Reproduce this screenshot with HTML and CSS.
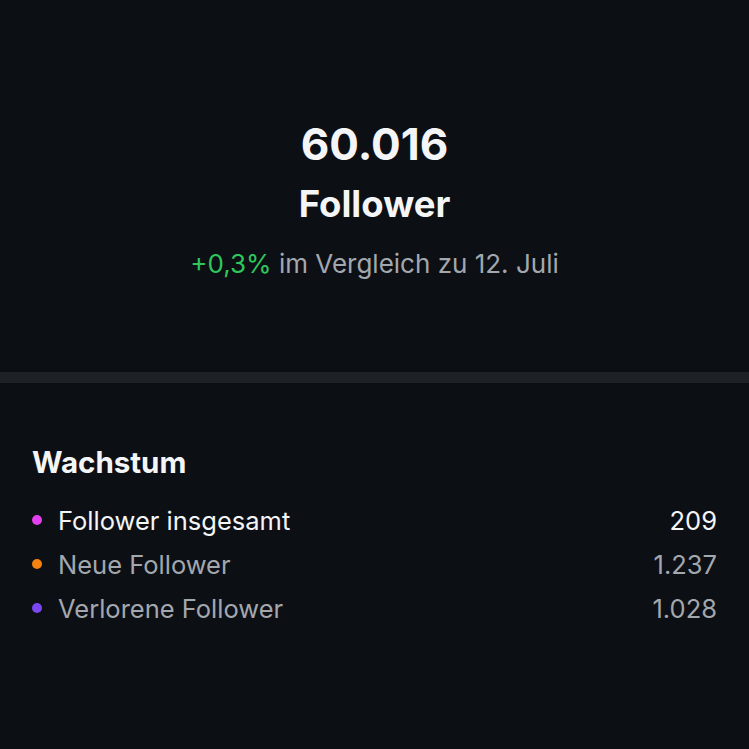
FILE: index.html
```html
<!DOCTYPE html>
<html lang="de">
<head>
<meta charset="utf-8">
<link rel="stylesheet" href="styles.css">
</head>
<body>
<section class="summary">
  <div class="total">60.016</div>
  <div class="label">Follower</div>
  <div class="compare"><span class="up">+0,3%</span> im Vergleich zu 12. Juli</div>
</section>
<div class="divider"></div>
<section class="growth">
  <h2 class="title">Wachstum</h2>
  <ul class="rows">
    <li class="row primary"><span class="dot pink"></span><span class="name">Follower insgesamt</span><span class="value">209</span></li>
    <li class="row"><span class="dot orange"></span><span class="name">Neue Follower</span><span class="value">1.237</span></li>
    <li class="row"><span class="dot purple"></span><span class="name">Verlorene Follower</span><span class="value">1.028</span></li>
  </ul>
</section>
</body>
</html>
```
FILE: styles.css
```css
html, body {
  margin: 0;
  padding: 0;
  background: #0c0f14;
  height: 100%;
}
body {
  font-family: Inter, "Noto Sans", sans-serif;
  color: #f4f5f7;
}
.summary {
  height: 372px;
  display: flex;
  flex-direction: column;
  align-items: center;
  box-sizing: border-box;
  padding-top: 118px;
}
.total {
  font-size: 44px;
  font-weight: 700;
  line-height: 52px;
}
.label {
  font-size: 36.5px;
  font-weight: 700;
  line-height: 44px;
  margin-top: 12px;
}
.compare {
  font-size: 26px;
  line-height: 32px;
  color: #a3a7ae;
  margin-top: 22px;
}
.up {
  color: #2fc65c;
}
.divider {
  height: 11px;
  background: #1e2126;
}
.growth {
  padding: 61px 32px 0 32px;
}
.title {
  margin: 0;
  font-size: 29.5px;
  font-weight: 700;
  line-height: 36px;
}
.rows {
  list-style: none;
  margin: 18px 0 0 0;
  padding: 0;
}
.row {
  display: flex;
  align-items: center;
  height: 44px;
  font-size: 25.5px;
  color: #a3a7ae;
}
.row.primary {
  color: #f4f5f7;
}
.dot {
  width: 10px;
  height: 10px;
  border-radius: 50%;
  margin-right: 16px;
  flex: none;
}
.pink { background: #e43fec; }
.orange { background: #f5820f; }
.purple { background: #7b47f2; }
.name {
  flex: 1;
}
.value {
  text-align: right;
}
```
